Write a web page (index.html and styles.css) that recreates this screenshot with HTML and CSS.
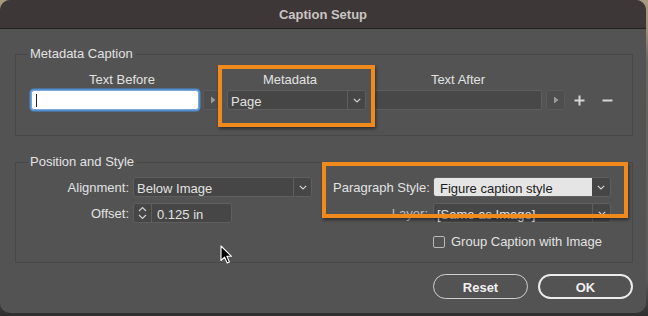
FILE: index.html
```html
<!DOCTYPE html>
<html>
<head>
<meta charset="utf-8">
<link rel="stylesheet" href="styles.css">
</head>
<body>
<div class="window">
  <div class="titlebar">Caption Setup</div>
  <div class="body">
    <fieldset class="group group-meta">
      <legend>Metadata Caption</legend>
      <div class="meta-row">
        <div class="col col-before">
          <div class="col-label">Text Before</div>
          <div class="ctrl-row">
            <div class="text-input light focused"><span class="caret"></span></div>
            <div class="arrow-btn"><svg width="6" height="8" viewBox="0 0 6 8"><path d="M1 0.5 L5.5 4 L1 7.5 Z" fill="#9a9a9a"/></svg></div>
          </div>
        </div>
        <div class="col col-meta">
          <div class="col-label">Metadata</div>
          <div class="select dark meta-select">
            <span class="select-text">Page</span>
            <span class="select-btn"><svg width="8" height="5" viewBox="0 0 8 5"><path d="M0.8 0.8 L4 4 L7.2 0.8" fill="none" stroke="#cfcfcf" stroke-width="1.2"/></svg></span>
          </div>
        </div>
        <div class="col col-after">
          <div class="col-label">Text After</div>
          <div class="ctrl-row">
            <div class="text-input dark after-input"></div>
            <div class="arrow-btn"><svg width="6" height="8" viewBox="0 0 6 8"><path d="M1 0.5 L5.5 4 L1 7.5 Z" fill="#9a9a9a"/></svg></div>
            <span class="icon-btn plus"><svg width="11" height="11" viewBox="0 0 11 11"><path d="M5.5 0.5 V10.5 M0.5 5.5 H10.5" stroke="#d6d6d6" stroke-width="2"/></svg></span>
            <span class="icon-btn minus"><svg width="11" height="11" viewBox="0 0 11 11"><path d="M0.5 5.5 H10.5" stroke="#d6d6d6" stroke-width="2"/></svg></span>
          </div>
        </div>
      </div>
    </fieldset>

    <fieldset class="group group-pos">
      <legend>Position and Style</legend>
      <div class="pos-row">
        <div class="form-grid left-grid">
          <label class="form-label">Alignment:</label>
          <div class="select dark align-select">
            <span class="select-text">Below Image</span>
            <span class="select-btn"><svg width="8" height="5" viewBox="0 0 8 5"><path d="M0.8 0.8 L4 4 L7.2 0.8" fill="none" stroke="#cfcfcf" stroke-width="1.2"/></svg></span>
          </div>
          <label class="form-label">Offset:</label>
          <div class="spin">
            <span class="spin-btn"><svg width="9" height="16" viewBox="0 0 9 16"><path d="M1 6 L4.5 2.5 L8 6 M1 10 L4.5 13.5 L8 10" fill="none" stroke="#d0d0d0" stroke-width="1.2"/></svg></span>
            <span class="spin-input">0.125 in</span>
          </div>
        </div>
        <div class="form-grid right-grid">
          <label class="form-label">Paragraph Style:</label>
          <div class="select lightsel">
            <span class="select-text">Figure caption style</span>
            <span class="select-btn"><svg width="8" height="5" viewBox="0 0 8 5"><path d="M0.8 0.8 L4 4 L7.2 0.8" fill="none" stroke="#cfcfcf" stroke-width="1.2"/></svg></span>
          </div>
          <label class="form-label dim">Layer:</label>
          <div class="select dark">
            <span class="select-text">[Same as Image]</span>
            <span class="select-btn"><svg width="8" height="5" viewBox="0 0 8 5"><path d="M0.8 0.8 L4 4 L7.2 0.8" fill="none" stroke="#cfcfcf" stroke-width="1.2"/></svg></span>
          </div>
          <span></span>
          <div class="check-row"><span class="checkbox"></span><span>Group Caption with Image</span></div>
        </div>
      </div>
    </fieldset>

    <div class="buttons">
      <button class="btn">Reset</button>
      <button class="btn btn-default">OK</button>
    </div>
  </div>

  <div class="highlight hl-meta"></div>
  <div class="highlight hl-para"></div>
  <svg class="cursor" width="13" height="19" viewBox="0 0 13 19"><path d="M1 1 L1 15.5 L4.6 12.2 L7.2 18 L9.4 17 L6.9 11.3 L11.5 11.3 Z" fill="#000" stroke="#fff" stroke-width="1.1" stroke-linejoin="round"/></svg>
</div>
</body>
</html>
```

FILE: styles.css
```css
* { box-sizing: border-box; }
html, body { margin: 0; padding: 0; }
body {
  width: 648px;
  height: 316px;
  background: linear-gradient(180deg, #a99a7d 0, #9c8f78 30px, #6a6660 60px, #5a5a5a 280px, #2e2e2e 316px);
  font-family: "Liberation Sans", Arial, sans-serif;
  font-size: 13px;
  color: #e2e2e2;
  overflow: hidden;
}
.window {
  position: relative;
  width: 646px;
  height: 313px;
  background: #535353;
  border-radius: 10px;
  overflow: hidden;
  display: flex;
  flex-direction: column;
}
.titlebar {
  height: 29px;
  flex: none;
  background: #3d3737;
  border-bottom: 1px solid #242121;
  display: flex;
  align-items: center;
  justify-content: center;
  font-weight: bold;
  font-size: 13px;
  color: #c9c5c3;
  padding-top: 1px;
}
.body {
  padding: 1px 14px 0 15px;
  display: flex;
  flex-direction: column;
}
.group {
  margin: 0;
  border: 1px solid #484848;
  min-width: 0;
  width: 618px;
}
.group legend {
  margin-left: 12px;
  padding: 0 3px 0 2px;
  line-height: 16px;
  color: #e2e2e2;
}
.group-meta {
  margin-top: 16px;
  padding: 10px 0 25px 0;
}
.meta-row {
  display: flex;
  padding-left: 15px;
}
.col { display: flex; flex-direction: column; }
.col-label {
  line-height: 16px;
  height: 16px;
  margin-bottom: 2px;
  text-align: center;
}
.col-before { width: 191px; }
.col-before .col-label { padding-right: 9px; }
.col-meta { width: 139px; margin-left: 5px; }
.col-meta .col-label { padding-right: 13px; }
.col-after { margin-left: 8px; }
.col-after .col-label { width: 168px; }
.ctrl-row { display: flex; align-items: center; height: 20px; }
.text-input {
  width: 168px;
  height: 20px;
  border-radius: 3px;
}
.text-input.light {
  background: #fff;
  border: 1px solid #7aa7d8;
  box-shadow: 0 0 0 1.5px #4f8fd6;
  display: flex;
  align-items: center;
  padding-left: 4px;
}
.caret { width: 1px; height: 13px; background: #222; }
.text-input.dark {
  background: #484848;
  border: 1px solid #5f5f5f;
}
.arrow-btn {
  width: 19px;
  height: 20px;
  margin-left: 4px;
  border: 1px solid #5a5a5a;
  border-radius: 2px;
  background: #4e4e4e;
  display: flex;
  align-items: center;
  justify-content: center;
}
.icon-btn { display: flex; align-items: center; justify-content: center; }
.plus { margin-left: 9px; }
.minus { margin-left: 17px; }
.select {
  display: flex;
  height: 20px;
  border-radius: 3px;
  overflow: hidden;
  align-items: stretch;
}
.select.dark {
  background: #464646;
  border: 1px solid #5e5e5e;
}
.select-text {
  flex: 1;
  padding-left: 3px;
  line-height: 19px;
  padding-top: 1px;
  white-space: nowrap;
  overflow: hidden;
}
.select-btn {
  width: 18px;
  flex: none;
  border-left: 1px solid #5e5e5e;
  display: flex;
  align-items: center;
  justify-content: center;
}
.meta-select { width: 139px; }
.group-pos {
  margin-top: 18px;
  padding: 7px 21px 11px 0;
}
.pos-row { display: flex; justify-content: space-between; }
.form-grid {
  display: grid;
  row-gap: 6px;
  grid-auto-rows: 20px;
  align-items: center;
}
.left-grid { grid-template-columns: 113px 179px; column-gap: 4px; }
.right-grid { grid-template-columns: 95px 178px; column-gap: 5px; grid-template-rows: 20px 20px 22px; }
.form-label { text-align: right; white-space: nowrap; padding-top: 1px; }
.form-label.dim { color: #bdbdbd; }
.align-select { width: 179px; }
.spin {
  display: flex;
  width: 99px;
  height: 20px;
  border: 1px solid #5e5e5e;
  border-radius: 3px;
  background: #464646;
}
.spin-btn {
  width: 18px;
  border-right: 1px solid #5e5e5e;
  display: flex;
  align-items: center;
  justify-content: center;
}
.spin-input { padding-left: 5px; line-height: 19px; padding-top: 1px; }
.select.lightsel {
  border: 1px solid #5e5e5e;
  background: #464646;
}
.lightsel .select-text {
  background: #e5e5e5;
  color: #1c1c1c;
  padding-left: 6px;
}
.lightsel .select-btn { border-left: none; }
.check-row {
  display: flex;
  align-items: center;
  gap: 6px;
  margin-top: 3px;
}
.checkbox {
  width: 12px;
  height: 12px;
  border: 1px solid #b9b9b9;
  border-radius: 2px;
}
.buttons {
  display: flex;
  justify-content: flex-end;
  gap: 10px;
  margin-top: 11px;
  width: 618px;
}
.btn {
  width: 95px;
  height: 25px;
  border-radius: 13px;
  background: transparent;
  border: 1.5px solid #cfcfcf;
  color: #f0f0f0;
  font-family: "Liberation Sans", Arial, sans-serif;
  font-weight: bold;
  font-size: 13px;
  padding: 1px 0 0;
}
.btn-default { border: 2px solid #ececec; }
.highlight {
  position: absolute;
  border: 4.5px solid #f18a1c;
  box-shadow: 1px 2px 3px rgba(0,0,0,0.45);
}
.hl-meta { left: 218px; top: 65px; width: 157px; height: 62px; }
.hl-para { left: 322px; top: 162px; width: 306px; height: 56px; }
.cursor { position: absolute; left: 220px; top: 245px; }
```
